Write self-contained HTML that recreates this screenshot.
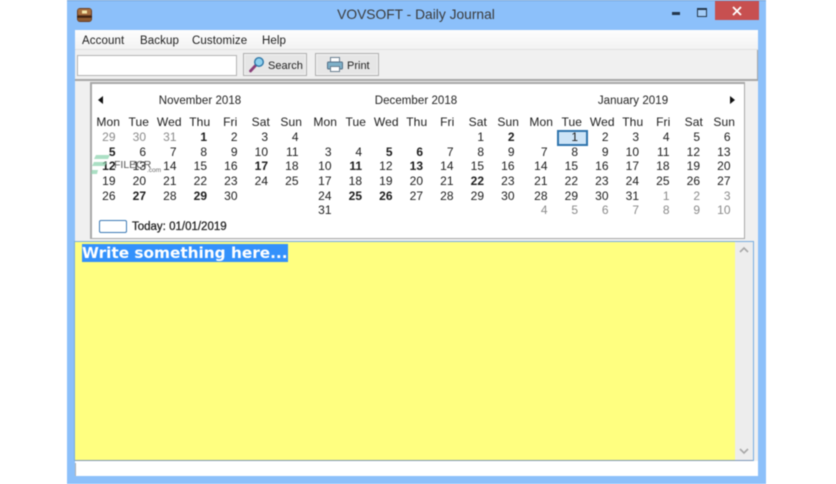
<!DOCTYPE html>
<html><head><meta charset="utf-8"><style>
html,body{margin:0;padding:0;background:#fff;width:836px;height:484px;overflow:hidden}
#w{position:absolute;left:0;top:0;width:836px;height:484px;font:12px "Liberation Sans",sans-serif;color:#1c1c1c;filter:blur(.4px)}
.a{position:absolute}
.t{position:absolute;white-space:nowrap}
.m{position:absolute;display:grid;grid-template-columns:repeat(7,30.5px);grid-auto-rows:14.7px;line-height:14.7px;text-align:right;font-size:12px}
.h{position:absolute;display:grid;grid-template-columns:repeat(7,30.5px);line-height:15px;text-align:center;font-size:12px;letter-spacing:.1px}
.m b{font-weight:bold}.m s{text-decoration:none;color:#8a8a8a}
.ti{position:absolute;width:120px;text-align:center;line-height:15px;font-size:11.5px;letter-spacing:.05px;color:#222}
.mn{position:absolute;white-space:nowrap;top:34px;line-height:14px;font-size:11.5px;letter-spacing:.1px}
.btn{position:absolute;box-sizing:border-box;background:#e6e6e6;border:1px solid #aeaeae;box-shadow:inset 0 0 0 1px #f4f4f4;height:23px;top:53px}
</style></head><body><div id="w">
<!-- window frame -->
<div class="a" style="left:67px;top:0;width:699px;height:484px;background:#8cc0fa"></div>
<div class="a" style="left:67px;top:0;width:699px;height:1px;background:#6f9fd6"></div>
<div class="t" style="left:316px;width:200px;text-align:center;top:6px;line-height:18px;font-size:13.8px;color:#3a3a3a">VOVSOFT - Daily Journal</div>
<!-- chest icon -->
<svg class="a" style="left:76px;top:7px" width="17" height="16" viewBox="0 0 17 16"><rect x="1" y="1" width="15" height="14" rx="3" fill="#6a3d22"/><rect x="2" y="2" width="13" height="6" rx="1" fill="#a87040"/><rect x="6" y="3.500" width="5" height="3" fill="#f3e6a8"/><rect x="1" y="9" width="15" height="1.500" fill="#3a2010"/><rect x="2" y="11" width="13" height="3" fill="#8c5a30"/></svg>
<!-- caption buttons -->
<div class="a" style="left:672px;top:12px;width:8px;height:3px;background:#25384d"></div>
<div class="a" style="left:697px;top:8px;width:8px;height:6px;border:1px solid #25384d;border-top-width:2px;background:#a4cdf7"></div>
<div class="a" style="left:715px;top:1px;width:44px;height:19px;background:#c75050"></div>
<svg class="a" style="left:731px;top:5px" width="12" height="12"><path d="M2 2L10 10M10 2L2 10" stroke="#fff" stroke-width="1.800"/></svg>
<!-- client -->
<div class="a" style="left:75px;top:30px;width:683px;height:446px;background:#f0f0f0"></div>
<div class="a" style="left:75px;top:30px;width:683px;height:19px;background:linear-gradient(#fdfdfd,#f3f3f3)"></div>
<div class="mn" style="left:82px">Account</div>
<div class="mn" style="left:140px">Backup</div>
<div class="mn" style="left:192px">Customize</div>
<div class="mn" style="left:262px">Help</div>
<!-- toolbar -->
<div class="a" style="left:75px;top:49px;width:683px;height:1px;background:#e0e0e0"></div>
<div class="a" style="left:75px;top:79px;width:683px;height:2px;background:#a6a6a6"></div>
<div class="a" style="left:757px;top:50px;width:1px;height:30px;background:#a6a6a6"></div>
<div class="a" style="left:77px;top:55px;width:158px;height:19px;background:#fff;border:1px solid #b4b4b4"></div>
<div class="btn" style="left:243px;width:64px"></div>
<svg class="a" style="left:248px;top:56px" width="18" height="17" viewBox="0 0 18 17"><path d="M2.500 15L8 9" stroke="#8a3f78" stroke-width="2.800" stroke-linecap="round"/><circle cx="11" cy="6" r="4.300" fill="#8fd0ee" stroke="#2f78a8" stroke-width="1.400"/></svg>
<div class="t" style="left:268px;top:59px;line-height:14px;font-size:11px;color:#222">Search</div>
<div class="btn" style="left:315px;width:64px"></div>
<svg class="a" style="left:326px;top:56px" width="18" height="17" viewBox="0 0 18 17"><rect x="4.500" y="1.500" width="9" height="5" fill="#fff" stroke="#6a7f90"/><rect x="1.500" y="6" width="15" height="7" rx="1" fill="#7fb0c8" stroke="#557088"/><rect x="4.500" y="10.500" width="9" height="5" fill="#fff" stroke="#6a7f90"/></svg>
<div class="t" style="left:347px;top:59px;line-height:14px;font-size:11px;color:#222">Print</div>
<!-- calendar box -->
<div class="a" style="left:90px;top:82px;width:652px;height:154px;background:#fff;border:2px solid #a8a8a8;border-right-width:1px;border-bottom-width:1px"></div>
<svg class="a" style="left:97px;top:95px" width="8" height="10"><path d="M6 1V9L1 5Z" fill="#111"/></svg>
<svg class="a" style="left:729px;top:95px" width="8" height="10"><path d="M1 1V9L6 5Z" fill="#111"/></svg>
<div class="ti" style="left:140px;top:94px">November 2018</div>
<div class="ti" style="left:356px;top:94px">December 2018</div>
<div class="ti" style="left:573px;top:94px">January 2019</div>
<div class="h" style="left:93px;top:115px"><span>Mon</span><span>Tue</span><span>Wed</span><span>Thu</span><span>Fri</span><span>Sat</span><span>Sun</span></div>
<div class="h" style="left:310px;top:115px"><span>Mon</span><span>Tue</span><span>Wed</span><span>Thu</span><span>Fri</span><span>Sat</span><span>Sun</span></div>
<div class="h" style="left:526px;top:115px"><span>Mon</span><span>Tue</span><span>Wed</span><span>Thu</span><span>Fri</span><span>Sat</span><span>Sun</span></div>
<!-- selected -->
<div class="a" style="left:557px;top:130px;width:27px;height:12px;background:#cde4f7;border:2px solid #2f74ad"></div>
<div class="m" style="left:85px;top:130px"><s>29</s><s>30</s><s>31</s><b>1</b><span>2</span><span>3</span><span>4</span><b>5</b><span>6</span><span>7</span><span>8</span><span>9</span><span>10</span><span>11</span><b>12</b><span>13</span><span>14</span><span>15</span><span>16</span><b>17</b><span>18</span><span>19</span><span>20</span><span>21</span><span>22</span><span>23</span><span>24</span><span>25</span><span>26</span><b>27</b><span>28</span><b>29</b><span>30</span></div>
<div class="m" style="left:301px;top:130px"><i></i><i></i><i></i><i></i><i></i><span>1</span><b>2</b><span>3</span><span>4</span><b>5</b><b>6</b><span>7</span><span>8</span><span>9</span><span>10</span><b>11</b><span>12</span><b>13</b><span>14</span><span>15</span><span>16</span><span>17</span><span>18</span><span>19</span><span>20</span><span>21</span><b>22</b><span>23</span><span>24</span><b>25</b><b>26</b><span>27</span><span>28</span><span>29</span><span>30</span><span>31</span></div>
<div class="m" style="left:517px;top:130px"><i></i><span>1</span><span>2</span><span>3</span><span>4</span><span>5</span><span>6</span><span>7</span><span>8</span><span>9</span><span>10</span><span>11</span><span>12</span><span>13</span><span>14</span><span>15</span><span>16</span><span>17</span><span>18</span><span>19</span><span>20</span><span>21</span><span>22</span><span>23</span><span>24</span><span>25</span><span>26</span><span>27</span><span>28</span><span>29</span><span>30</span><span>31</span><s>1</s><s>2</s><s>3</s><s>4</s><s>5</s><s>6</s><s>7</s><s>8</s><s>9</s><s>10</s></div>
<!-- today -->
<div class="a" style="left:99px;top:220px;width:26px;height:11px;border:1.500px solid #3d7ab5;border-radius:2px"></div>
<div class="t" style="left:132px;top:220px;line-height:15px;font-size:11.5px;-webkit-text-stroke:.25px #222">Today: 01/01/2019</div>
<!-- watermark -->
<svg class="a" style="left:90px;top:152px" width="22" height="26"><path d="M6 3H20L18 7H4ZM4 10H17L15 14H2ZM2 18H8L7 22H1Z" fill="#8fd4b0" opacity=".75"/></svg>
<div class="t" style="left:114px;top:158px;line-height:14px;font-size:10.5px;color:#555">FILECR</div>
<div class="t" style="left:147px;top:167px;line-height:8px;font-size:6.5px;color:#666">.com</div>
<!-- memo -->
<div class="a" style="left:74px;top:241px;width:678px;height:218px;background:#ededed;border:1px solid #78aee0"></div>
<div class="a" style="left:75px;top:242px;width:660px;height:218px;background:#ffff80"></div>
<div class="a" style="left:75px;top:460px;width:678px;height:1px;background:#7c97b8"></div>
<svg class="a" style="left:738px;top:246px" width="12" height="9"><path d="M2 6L6 2L10 6" fill="none" stroke="#a8a8a8" stroke-width="1.600"/></svg>
<svg class="a" style="left:738px;top:447px" width="12" height="9"><path d="M2 2L6 6L10 2" fill="none" stroke="#a8a8a8" stroke-width="1.600"/></svg>
<div class="t" style="left:82px;top:244px;height:18px;line-height:18px;background:#3391fb;color:#fff;font:bold 15.3px/18px 'DejaVu Sans',sans-serif">Write something here...</div>
<!-- status bar -->
<div class="a" style="left:75px;top:461px;width:683px;height:15px;background:#fff"></div>
<div class="a" style="left:75px;top:463px;width:1px;height:13px;background:#b0b0b0"></div>
</div></body></html>
